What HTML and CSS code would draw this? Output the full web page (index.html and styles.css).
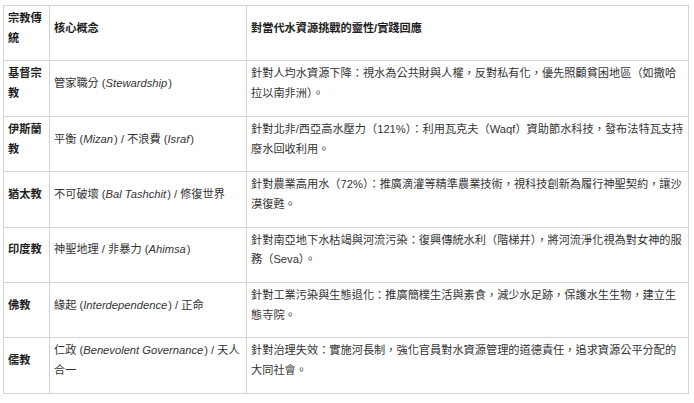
FILE: index.html
```html
<!DOCTYPE html>
<html lang="zh-Hant">
<head>
<meta charset="utf-8">
<title>宗教傳統與水資源</title>
<link rel="stylesheet" href="styles.css">
</head>
<body>
<table class="grid">
  <colgroup>
    <col class="c1">
    <col class="c2">
    <col class="c3">
  </colgroup>
  <thead>
    <tr>
      <th>宗教傳統</th>
      <th>核心概念</th>
      <th>對當代水資源挑戰的靈性/實踐回應</th>
    </tr>
  </thead>
  <tbody>
    <tr>
      <th>基督宗教</th>
      <td>管家職分 (<em>Stewardship</em>)</td>
      <td>針對人均水資源下降：視水為公共財與人權，反對私有化，優先照顧貧困地區（如撒哈拉以南非洲）。</td>
    </tr>
    <tr>
      <th>伊斯蘭教</th>
      <td>平衡 (<em>Mizan</em>) / 不浪費 (<em>Israf</em>)</td>
      <td>針對北非/西亞高水壓力（121%）：利用瓦克夫（Waqf）資助節水科技，發布法特瓦支持廢水回收利用。</td>
    </tr>
    <tr>
      <th>猶太教</th>
      <td>不可破壞 (<em>Bal Tashchit</em>) / 修復世界</td>
      <td>針對農業高用水（72%）：推廣滴灌等精準農業技術，視科技創新為履行神聖契約，讓沙漠復甦。</td>
    </tr>
    <tr>
      <th>印度教</th>
      <td>神聖地理 / 非暴力 (<em>Ahimsa</em>)</td>
      <td>針對南亞地下水枯竭與河流污染：復興傳統水利（階梯井），將河流淨化視為對女神的服務（Seva）。</td>
    </tr>
    <tr>
      <th>佛教</th>
      <td>緣起 (<em>Interdependence</em>) / 正命</td>
      <td>針對工業污染與生態退化：推廣簡樸生活與素食，減少水足跡，保護水生生物，建立生態寺院。</td>
    </tr>
    <tr>
      <th>儒教</th>
      <td>仁政 (<em>Benevolent Governance</em>) <span>/ 天人</span><span>合一</span></td>
      <td>針對治理失效：實施河長制，強化官員對水資源管理的道德責任，追求資源公平分配的大同社會。</td>
    </tr>
  </tbody>
</table>
</body>
</html>
```
FILE: styles.css
```css
html, body {
  margin: 0;
  padding: 0;
  background: #ffffff;
}

body {
  padding: 5px 6px 0 3px;
  font-family: "Liberation Sans", "Noto Sans CJK TC", sans-serif;
  font-size: 11.2px;
  line-height: 19.7px;
  color: #1f1f1f;
}

.grid {
  border-collapse: collapse;
  table-layout: fixed;
  width: 685px;
}

.c1 { width: 46px; }
.c2 { width: 197px; }
.c3 { width: 442px; }

.grid th,
.grid td {
  border: 1px solid #d3d3d3;
  padding: 3px 4px 12px 4px;
  text-align: left;
  vertical-align: middle;
  word-break: break-all;
}

.grid th {
  font-weight: 700;
}

.grid td {
  font-weight: 400;
  color: #333333;
}

.grid em {
  font-style: italic;
  padding-right: 1px;
}
```
